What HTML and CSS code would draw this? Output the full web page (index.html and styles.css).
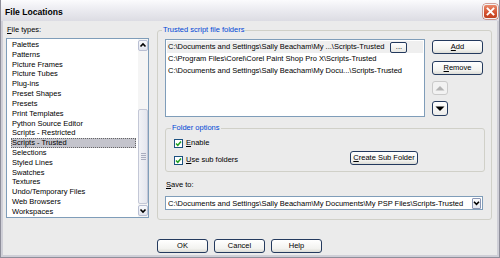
FILE: index.html
```html
<!DOCTYPE html>
<html>
<head>
<meta charset="utf-8">
<link rel="stylesheet" href="styles.css">
</head>
<body>
<div class="window">
  <div class="titlebar">
    <span class="title">File Locations</span>
    <span class="close"><svg width="15" height="15" viewBox="0 0 15 15"><path d="M4.5 4.5 L10.5 10.5 M10.5 4.5 L4.5 10.5" stroke="#fff" stroke-width="1.8" stroke-linecap="square"/></svg></span>
  </div>
  <div class="frame">
    <div class="content">
      <div class="left">
        <div class="label"><u>F</u>ile types:</div>
        <div class="listbox">
          <ul class="items">
            <li>Palettes</li>
            <li>Patterns</li>
            <li>Picture Frames</li>
            <li>Picture Tubes</li>
            <li>Plug-ins</li>
            <li>Preset Shapes</li>
            <li>Presets</li>
            <li>Print Templates</li>
            <li>Python Source Editor</li>
            <li>Scripts - Restricted</li>
            <li class="selected">Scripts - Trusted</li>
            <li>Selections</li>
            <li>Styled Lines</li>
            <li>Swatches</li>
            <li>Textures</li>
            <li>Undo/Temporary Files</li>
            <li>Web Browsers</li>
            <li>Workspaces</li>
          </ul>
          <div class="scrollbar">
            <div class="sb-btn"><svg width="10" height="11" viewBox="0 0 10 11"><path d="M2.5 6.5 L5 4 L7.5 6.5" fill="none" stroke="#000" stroke-width="1.6"/></svg></div>
            <div class="sb-track"><div class="sb-thumb"><span class="grip"></span></div></div>
            <div class="sb-btn"><svg width="10" height="11" viewBox="0 0 10 11"><path d="M2.5 4.5 L5 7 L7.5 4.5" fill="none" stroke="#000" stroke-width="1.6"/></svg></div>
          </div>
        </div>
      </div>

      <fieldset class="group main">
        <legend>Trusted script file folders</legend>
        <div class="top-row">
          <div class="paths">
            <div class="path current"><span>C:\Documents and Settings\Sally Beacham\My ...\Scripts-Trusted</span><span class="browse">...</span></div>
            <div class="path"><span>C:\Program Files\Corel\Corel Paint Shop Pro X\Scripts-Trusted</span></div>
            <div class="path"><span>C:\Documents and Settings\Sally Beacham\My Docu...\Scripts-Trusted</span></div>
          </div>
          <div class="side-btns">
            <div class="btn"><u>A</u>dd</div>
            <div class="btn gap"><u>R</u>emove</div>
            <div class="arrow disabled"><svg width="14" height="12" viewBox="0 0 14 12"><path d="M2.5 8.5 L7 4 L11.5 8.5 Z" fill="#b4b4b4"/></svg></div>
            <div class="arrow down"><svg width="14" height="13" viewBox="0 0 14 13"><path d="M2.5 4.5 L11.5 4.5 L7 9 Z" fill="#000"/></svg></div>
          </div>
        </div>

        <fieldset class="group options">
          <legend>Folder options</legend>
          <div class="opt-row">
            <label class="check"><span class="box"><svg width="7" height="7" viewBox="0 0 7 7"><path d="M1 3.5 L2.8 5.3 L6 1.6" fill="none" stroke="#21a121" stroke-width="1.5"/></svg></span><u>E</u>nable</label>
          </div>
          <div class="opt-row second">
            <label class="check wide"><span class="box"><svg width="7" height="7" viewBox="0 0 7 7"><path d="M1 3.5 L2.8 5.3 L6 1.6" fill="none" stroke="#21a121" stroke-width="1.5"/></svg></span><u>U</u>se sub folders</label>
            <div class="btn create"><u>C</u>reate Sub Folder</div>
          </div>
        </fieldset>

        <div class="label save"><u>S</u>ave to:</div>
        <div class="combo">
          <span class="combo-text">C:\Documents and Settings\Sally Beacham\My Documents\My PSP Files\Scripts-Trusted</span>
          <span class="dd"><svg width="9" height="10" viewBox="0 0 9 10"><path d="M2 3.8 L4.5 6.3 L7 3.8" fill="none" stroke="#000" stroke-width="1.6"/></svg></span>
        </div>
      </fieldset>

      <div class="dialog-btns">
        <div class="btn ok">OK</div>
        <div class="btn">Cancel</div>
        <div class="btn">Help</div>
      </div>
    </div>
  </div>
</div>
</body>
</html>
```

FILE: styles.css
```css
* { box-sizing: border-box; }

html, body {
  margin: 0;
  padding: 0;
}

body {
  width: 500px;
  height: 258px;
  overflow: hidden;
  font-family: "Liberation Sans", Arial, sans-serif;
  font-size: 7.5px;
  color: #000;
  background: #ffffff;
}

.window {
  width: 500px;
  height: 258px;
  display: flex;
  flex-direction: column;
  border: 1px solid #8e8e9a;
  border-top: 0;
}

.titlebar {
  height: 21px;
  flex: none;
  display: flex;
  align-items: center;
  justify-content: space-between;
  padding: 0 1px 0 4px;
  background: linear-gradient(#fbfbfd, #ececf1 45%, #dcdce3);
}

.title {
  font-weight: bold;
  font-size: 8.6px;
  margin-top: 2px;
}

.close {
  width: 15px;
  height: 15px;
  border-radius: 3px;
  border: 1px solid #f4f4f4;
  background: linear-gradient(#e98a6c, #d4512f 60%, #c0401f);
  display: flex;
  align-items: center;
  justify-content: center;
  margin-top: 1px;
  box-shadow: 0 0 0 0.5px #b04a3a;
}

.close svg { display: block; margin: -1px; }

.frame {
  flex: 1;
  background: #ebebeb;
  border: 2px solid #cfcfd7;
  border-top: 0;
}

.content {
  display: grid;
  grid-template-columns: 143px 335px;
  column-gap: 8px;
  align-items: start;
  padding: 4px 0 0 3px;
}

.label {
  height: 10px;
  line-height: 10px;
}

/* left list */
.left .label { margin-bottom: 3px; padding-left: 1px; }

.listbox {
  height: 180px;
  border: 1px solid #7f9db9;
  background: #fff;
  display: flex;
}

.items {
  list-style: none;
  margin: 0;
  padding: 1px 0 0 0;
  flex: 1;
  overflow: hidden;
}

.items li {
  height: 9.82px;
  line-height: 9.82px;
  margin: 0 2px 0 4px;
  padding-left: 1px;
  white-space: nowrap;
}

.items li.selected {
  background: #c4c4cc;
  outline: 1px dotted #666;
  outline-offset: -1px;
}

.scrollbar {
  width: 10px;
  flex: none;
  display: flex;
  flex-direction: column;
  padding: 1px 0;
  background: #f5f5f5;
}

.sb-btn {
  height: 11px;
  border: 1px solid #b9bfd3;
  border-radius: 2px;
  background: linear-gradient(#f8f9fc, #e2e5ee);
  display: flex;
  align-items: center;
  justify-content: center;
}

.sb-btn svg { display: block; margin: -1px; }

.sb-track {
  flex: 1;
  display: flex;
  flex-direction: column;
  justify-content: flex-end;
}

.sb-thumb {
  height: 95px;
  margin-bottom: 1px;
  border: 1px solid #c3c7d6;
  border-radius: 2px;
  background: linear-gradient(90deg, #f1f2f6, #e4e6ee);
  display: flex;
  align-items: center;
  justify-content: center;
}

.grip {
  width: 5px;
  height: 7px;
  background: repeating-linear-gradient(#a9adbf 0 1px, transparent 1px 2px);
}

/* group boxes */
.group {
  margin: 0;
  border: 1px solid #d0d0c8;
  border-radius: 3px;
  min-width: 0;
}

.group legend {
  padding: 0 1px;
  margin-left: -3px;
  height: 10px;
  line-height: 10px;
  color: #0046d5;
}

.main {
  padding: 4px 6px 9px 7px;
}

.top-row {
  display: flex;
  gap: 7px;
}

.paths {
  width: 260px;
  height: 78px;
  border: 1px solid #7f9db9;
  background: #fff;
  padding: 1px 1px 0 1px;
}

.path {
  height: 12px;
  line-height: 12px;
  padding-left: 1px;
  display: flex;
  align-items: center;
  white-space: nowrap;
}

.path.current {
  background: #efefef;
}

.browse {
  width: 17px;
  height: 11px;
  line-height: 8px;
  margin-left: 6px;
  border: 1px solid #243a5e;
  border-radius: 2px;
  background: linear-gradient(#ffffff, #e9e9e4);
  text-align: center;
}

.side-btns {
  width: 51px;
  display: flex;
  flex-direction: column;
  align-items: flex-start;
  padding-top: 1px;
}

.btn {
  height: 14px;
  line-height: 12px;
  border: 1px solid #243a5e;
  border-radius: 3px;
  background: linear-gradient(#ffffff, #f3f3f0 70%, #dcdcd6);
  text-align: center;
  white-space: nowrap;
}

.side-btns .btn { width: 51px; }
.side-btns .btn.gap { margin-top: 7px; }

.arrow {
  width: 16px;
  height: 14px;
  border-radius: 3px;
  display: flex;
  align-items: center;
  justify-content: center;
}

.arrow svg { display: block; }

.arrow.disabled {
  margin-top: 6px;
  border: 1px solid #cacaca;
  background: #f2f2f2;
}

.arrow.down {
  margin-top: 6px;
  height: 15px;
  border: 1px solid #243a5e;
  background: linear-gradient(#ffffff, #ececea);
}

.options {
  margin-top: 6px;
  padding: 5px 6px 6px 8px;
}

.opt-row {
  display: flex;
  align-items: flex-end;
}

.opt-row.second {
  margin-top: 3px;
}

.check {
  display: flex;
  align-items: center;
  height: 10px;
  line-height: 10px;
}

.check.wide {
  width: 176px;
  flex: none;
}

.box {
  width: 9px;
  height: 9px;
  border: 1px solid #1c5180;
  background: #fff;
  margin-right: 3px;
  display: flex;
  align-items: center;
  justify-content: center;
}

.box svg { display: block; }

.btn.create {
  width: 68px;
  height: 14px;
}

.label.save {
  margin-top: 8px;
  padding-left: 1px;
}

.combo {
  margin-top: 6px;
  width: 318px;
  height: 14px;
  border: 1px solid #7f9db9;
  background: #fff;
  display: flex;
  align-items: center;
  padding: 0 1px 0 2px;
}

.combo-text {
  flex: 1;
  white-space: nowrap;
  overflow: hidden;
}

.dd {
  width: 9px;
  height: 11px;
  border: 1px solid #8a96b4;
  border-radius: 1px;
  background: linear-gradient(#fafbfd, #e4e7ef);
  display: flex;
  align-items: center;
  justify-content: center;
}

.dd svg { display: block; margin: -1px; }

.dialog-btns {
  grid-column: 2;
  margin-top: 19px;
  display: flex;
  gap: 6px;
}

.dialog-btns .btn {
  width: 51px;
}

.dialog-btns .btn.ok {
  width: 51px;
}
```
